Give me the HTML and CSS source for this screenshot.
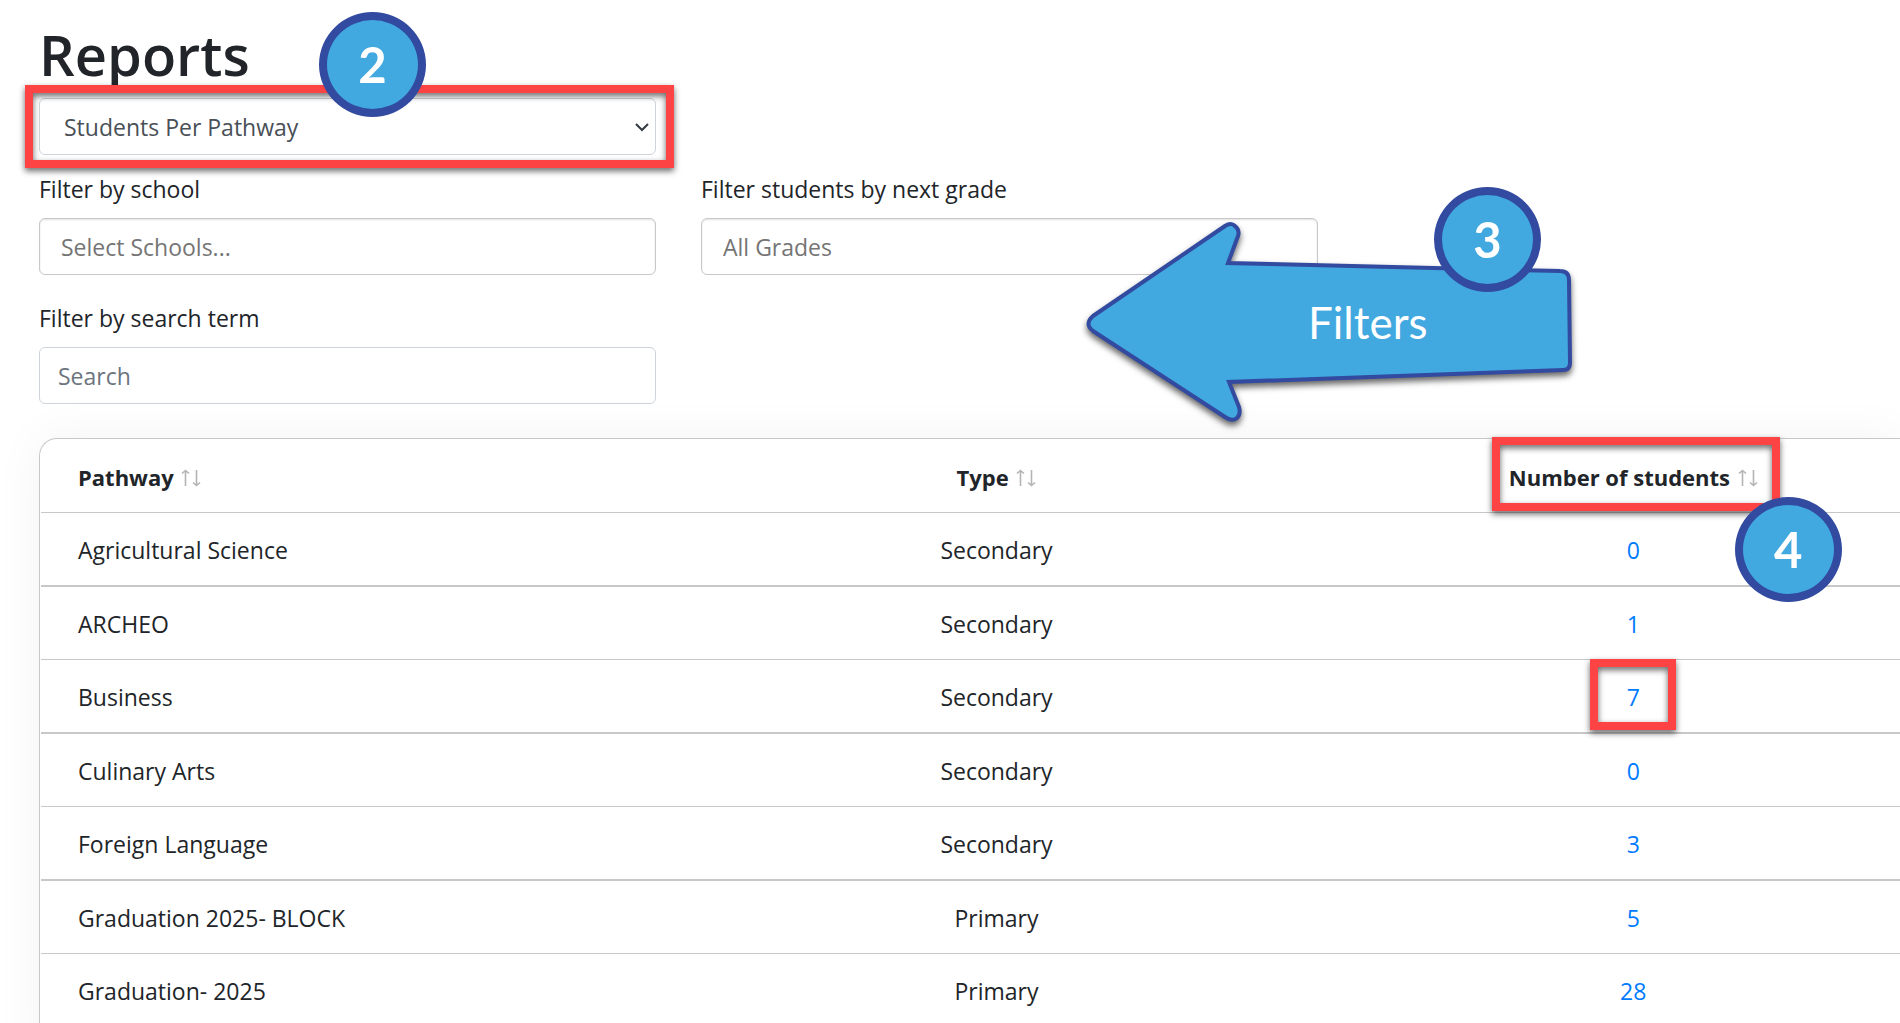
FILE: index.html
```
<!DOCTYPE html>
<html lang="en">
<head>
    <meta charset="UTF-8">
    <meta name="viewport" content="width=device-width, initial-scale=1.0">
    <title>Reports</title>
    <link rel="stylesheet" href="styles.css">
</head>
<body>
    <svg class="defs" width="0" height="0" aria-hidden="true">
        <symbol id="sort" viewBox="0 0 20 18">
            <path d="M4.5 17V1.5M1 4.5L4.5 1.5L8 4.5M15.5 1V16.5M12 13.5L15.5 16.5L19 13.5" fill="none" stroke="#b4b4b4" stroke-width="1.6"/>
        </symbol>
    </svg>

    <main class="page">
        <h1>Reports</h1>

        <div class="filters">
            <div class="report-select">
                <select class="control" id="report" aria-label="Report">
                    <option>Students Per Pathway</option>
                </select>
                <svg class="chevron" viewBox="0 0 14 10" aria-hidden="true">
                    <path d="M1 2L7 8L13 2" fill="none" stroke="#343a40" stroke-width="2"/>
                </svg>
                <span class="highlight"></span>
                <span class="badge badge-report">2</span>
            </div>

            <div class="field field-school">
                <label for="school">Filter by school</label>
                <input class="control picker" id="school" type="text" placeholder="Select Schools...">
            </div>

            <div class="field">
                <label for="grade">Filter students by next grade</label>
                <input class="control picker" id="grade" type="text" placeholder="All Grades">
            </div>

            <div class="field field-search">
                <label for="search">Filter by search term</label>
                <input class="control" id="search" type="text" placeholder="Search">
            </div>

            <div class="callout">
                <svg viewBox="0 0 490 206" aria-hidden="true">
                    <path d="M9 96L141 6Q147 2 151 6Q156 10 154 16L144 43L476 51Q485 51 485 60L486 143Q486 150 479 150L145 162L155 187Q157 194 153 198Q148 202 141 197L9 111Q0 104 9 96Z" fill="#41a8e0" stroke="#324a9f" stroke-width="4"/>
                </svg>
                <span class="callout-text">Filters</span>
                <span class="badge badge-filters">3</span>
            </div>
        </div>

        <div class="card">
            <table>
                <thead>
                    <tr>
                        <th class="pathway"><button type="button">Pathway <svg class="sort"><use href="#sort"/></svg></button></th>
                        <th class="type"><button type="button">Type <svg class="sort"><use href="#sort"/></svg></button></th>
                        <th class="count">
                            <div class="marked marked-head">
                                <button type="button">Number of students <svg class="sort"><use href="#sort"/></svg></button>
                                <span class="highlight"></span>
                                <span class="badge badge-count">4</span>
                            </div>
                        </th>
                    </tr>
                </thead>
                <tbody>
                    <tr><td>Agricultural Science</td><td>Secondary</td><td><a href="#">0</a></td></tr>
                    <tr><td>ARCHEO</td><td>Secondary</td><td><a href="#">1</a></td></tr>
                    <tr><td>Business</td><td>Secondary</td><td><div class="marked marked-cell"><a href="#">7</a><span class="highlight"></span></div></td></tr>
                    <tr><td>Culinary Arts</td><td>Secondary</td><td><a href="#">0</a></td></tr>
                    <tr><td>Foreign Language</td><td>Secondary</td><td><a href="#">3</a></td></tr>
                    <tr><td>Graduation 2025- BLOCK</td><td>Primary</td><td><a href="#">5</a></td></tr>
                    <tr><td>Graduation- 2025</td><td>Primary</td><td><a href="#">28</a></td></tr>
                </tbody>
            </table>
        </div>
    </main>
</body>
</html>
```
FILE: styles.css
```
* {
    box-sizing: border-box;
}

html {
    overflow: hidden;
}

body {
    margin: 0;
    background: #fff;
    color: #212529;
    font-family: "Open Sans", "Noto Sans", sans-serif;
    font-size: 23px;
    line-height: 36px;
}

.defs {
    position: absolute;
}

.page {
    padding: 18px 0 0 39px;
}

h1 {
    margin: 0 0 8px;
    font-size: 56px;
    font-weight: 600;
    line-height: 72px;
}

.filters {
    position: relative;
    display: grid;
    grid-template-columns: 617fr 617fr 537fr;
    column-gap: 45px;
}

.report-select {
    position: relative;
    margin-bottom: 16px;
}

.field-school,
.field-search {
    grid-column: 1;
}

.field {
    margin-bottom: 25px;
}

.field-search {
    margin-bottom: 34px;
}

label {
    display: block;
    margin-bottom: 11px;
}

.control {
    display: block;
    width: 100%;
    height: 57px;
    padding: 0 18px;
    border: 1px solid #ced4da;
    border-radius: 6px;
    background: #fff;
    color: #495057;
    font: inherit;
}

.control::placeholder {
    color: #6c757d;
    opacity: 1;
}

select.control {
    padding: 0 24px;
    appearance: none;
}

.picker {
    padding: 0 21px;
    border-color: #c8c8c8;
    box-shadow: inset 0 1px 2px rgba(0, 0, 0, 0.12);
}

.picker::placeholder {
    color: #757575;
}

.chevron {
    position: absolute;
    top: 24px;
    right: 7px;
    width: 14px;
    height: 10px;
    pointer-events: none;
}

/* annotations */
.highlight {
    position: absolute;
    inset: -13px -18px -13px -14px;
    border: 8px solid #fd4343;
    filter: drop-shadow(0 3px 3px rgba(0, 0, 0, 0.6));
    pointer-events: none;
}

.badge {
    position: absolute;
    display: flex;
    align-items: center;
    justify-content: center;
    width: 107px;
    height: 105px;
    border: 8px solid #324a9f;
    border-radius: 50%;
    background: #41a8e0;
    color: #fff;
    font: 700 49px/1 Lato, sans-serif;
}

.badge-report {
    top: -86px;
    left: 280px;
}

.badge-filters {
    top: -33px;
    left: 350px;
}

.badge-count {
    top: 55px;
    right: -84px;
}

.callout {
    position: absolute;
    top: 122px;
    left: 1045px;
    width: 490px;
}

.callout svg {
    display: block;
    width: 100%;
    overflow: visible;
    filter: drop-shadow(0 4px 3px rgba(0, 0, 0, 0.6));
}

.callout-text {
    position: absolute;
    top: 76px;
    left: 224px;
    color: #fff;
    font: 44px/52px Lato, sans-serif;
}

/* table */
.card {
    padding: 0 0 40px 1px;
    border: 1px solid #c8c8c8;
    border-right: 0;
    border-radius: 18px 0 0 18px;
    background: #fff;
    box-shadow: 0 0 50px rgba(0, 0, 0, 0.05);
}

table {
    width: 100%;
    border-collapse: separate;
    border-spacing: 0;
    table-layout: fixed;
}

th,
td {
    height: 73px;
    padding: 2px 0 0;
    border-bottom: 1px solid #c8c8c8;
    text-align: center;
}

th {
    height: 74px;
    font-size: 22px;
}

th:first-child,
td:first-child {
    padding-left: 37px;
    text-align: left;
}

th:last-child,
td:last-child {
    padding-left: 80px;
}

tbody tr:nth-child(odd) td {
    height: 74px;
    border-bottom-width: 2px;
}

.pathway {
    width: 35.8%;
}

.type {
    width: 31.2%;
}

th button {
    padding: 0;
    border: 0;
    background: none;
    color: inherit;
    font: inherit;
    white-space: nowrap;
}

.sort {
    width: 20px;
    height: 18px;
    margin-left: 2px;
    vertical-align: -1px;
}

.marked {
    position: relative;
    display: flex;
    align-items: center;
    justify-content: center;
    width: fit-content;
    height: 70px;
    margin: 0 auto;
}

.marked-head .highlight {
    inset: -5px -22px 1px -17px;
}

.marked-cell {
    width: 86px;
}

.marked-cell .highlight {
    inset: -3px 0 2px;
}

a {
    color: #007bff;
    text-decoration: none;
}
```
